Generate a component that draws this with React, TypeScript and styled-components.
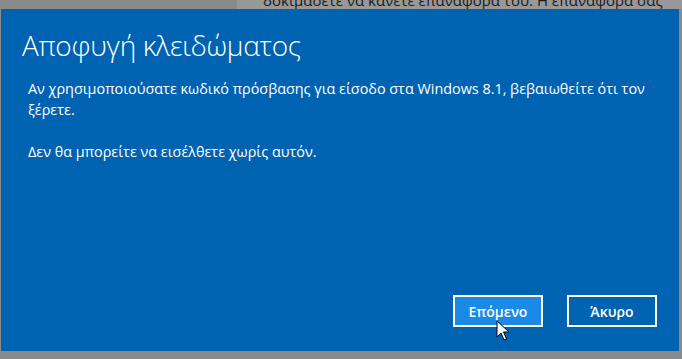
import styled, { createGlobalStyle } from "styled-components";

const GlobalStyle = createGlobalStyle`
  html, body {
    margin: 0;
    padding: 0;
    background: #8a8a8a;
    overflow: hidden;
  }
`;

const Page = styled.div`
  width: 682px;
  height: 359px;
  display: flex;
  flex-direction: column;
  font-family: "Open Sans", "Noto Sans", sans-serif;
`;

const Backdrop = styled.div`
  display: flex;
  height: 9px;
  overflow: hidden;
`;

const BackdropSide = styled.div`
  width: 237px;
  background: #898989;
`;

const BackdropPanel = styled.div`
  flex: 1;
  background: #989898;
  padding-left: 26px;
  color: #1a1a1a;
  font-size: 15px;
  line-height: 20px;
  white-space: nowrap;
  margin-top: -10px;
`;

const Dialog = styled.div`
  position: relative;
  height: 342px;
  margin: 0 3px 0 1px;
  background: #0063b1;
  color: #fff;
  display: flex;
  flex-direction: column;
  padding: 21px 22px 24px 21px;
  box-sizing: border-box;
`;

const Title = styled.h1`
  margin: 0;
  font-size: 28px;
  font-weight: 300;
  line-height: 30px;
  letter-spacing: -0.3px;
`;

const Body = styled.div`
  flex: 1;
  padding: 18px 0 0 6px;
  font-size: 14.4px;
  line-height: 21px;
`;

const Paragraph = styled.p`
  margin: 0 0 21px;
`;

const Actions = styled.div`
  display: flex;
  justify-content: flex-end;
  gap: 24px;
`;

const Button = styled.button<{ $hover?: boolean }>`
  width: 90px;
  height: 32px;
  box-sizing: border-box;
  border: 2px solid #fff;
  background: ${(p) => (p.$hover ? "#1a8ae6" : "transparent")};
  color: #fff;
  font-family: "Open Sans", "Noto Sans", sans-serif;
  font-size: 14px;
  font-weight: 600;
  padding: 0;
`;

const Cursor = styled.svg`
  position: absolute;
  left: 495px;
  top: 311px;
`;

export default function App() {
  return (
    <Page>
      <GlobalStyle />
      <Backdrop>
        <BackdropSide />
        <BackdropPanel>
          δοκιμάσετε να κάνετε επαναφορά του. Η επαναφορά σας
        </BackdropPanel>
      </Backdrop>
      <Dialog>
        <Title>Αποφυγή κλειδώματος</Title>
        <Body>
          <Paragraph>
            Αν χρησιμοποιούσατε κωδικό πρόσβασης για είσοδο στα Windows 8.1,
            βεβαιωθείτε ότι τον ξέρετε.
          </Paragraph>
          <Paragraph>Δεν θα μπορείτε να εισέλθετε χωρίς αυτόν.</Paragraph>
        </Body>
        <Actions>
          <Button $hover>Επόμενο</Button>
          <Button>Άκυρο</Button>
        </Actions>
        <Cursor width="14" height="22" viewBox="0 0 14 22">
          <path
            d="M1 1 L1 17 L5 13 L8 20 L10.5 19 L7.5 12 L13 12 Z"
            fill="#fff"
            stroke="#000"
            strokeWidth="1"
            strokeLinejoin="miter"
          />
        </Cursor>
      </Dialog>
    </Page>
  );
}
